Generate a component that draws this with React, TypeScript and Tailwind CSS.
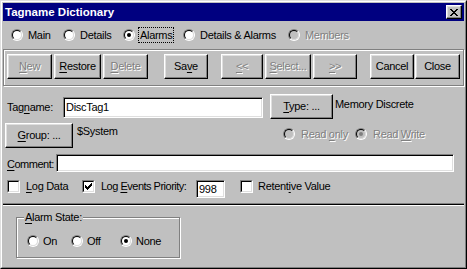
import React from "react";

const dis = "text-[#808080] [text-shadow:1px_1px_0_#fff]";

function Btn({
  className = "",
  disabled = false,
  children,
}: {
  className?: string;
  disabled?: boolean;
  children: React.ReactNode;
}) {
  return (
    <div
      className={`flex h-[25px] shrink-0 items-center justify-center border border-t-white border-l-white border-r-black border-b-black shadow-[inset_-1px_-1px_0_#808080,inset_1px_1px_0_#dfdfdf] ${
        disabled ? dis : "text-black"
      } ${className}`}
    >
      {children}
    </div>
  );
}

function Radio({ checked = false, disabled = false }: { checked?: boolean; disabled?: boolean }) {
  return (
    <span className="block h-[12px] w-[12px] shrink-0 rounded-full border border-t-[#808080] border-l-[#808080] border-r-white border-b-white">
      <span
        className={`flex h-full w-full items-center justify-center rounded-full border border-t-black border-l-black border-r-[#dfdfdf] border-b-[#dfdfdf] ${
          disabled ? "bg-[#c0c0c0]" : "bg-white"
        }`}
      >
        {checked && (
          <span className={`h-[4px] w-[4px] rounded-full ${disabled ? "bg-[#808080]" : "bg-black"}`} />
        )}
      </span>
    </span>
  );
}

function Check({ checked = false }: { checked?: boolean }) {
  return (
    <span className="block h-[13px] w-[13px] shrink-0 border border-t-[#808080] border-l-[#808080] border-r-white border-b-white">
      <span className="flex h-full w-full items-center justify-center border border-t-black border-l-black border-r-[#dfdfdf] border-b-[#dfdfdf] bg-white">
        {checked && (
          <svg width="7" height="7" viewBox="0 0 7 7" shapeRendering="crispEdges">
            <path
              d="M6 0h1v3h-1zM5 1h1v3h-1zM4 2h1v3h-1zM3 3h1v3h-1zM2 4h1v3h-1zM1 3h1v3h-1zM0 2h1v3h-1z"
              fill="#000"
            />
          </svg>
        )}
      </span>
    </span>
  );
}

function Field({ className = "", children }: { className?: string; children?: React.ReactNode }) {
  return (
    <div
      className={`flex shrink-0 items-center border border-t-[#808080] border-l-[#808080] border-r-white border-b-white bg-white pl-[2px] shadow-[inset_1px_1px_0_#000,inset_-1px_-1px_0_#dfdfdf] ${className}`}
    >
      {children}
    </div>
  );
}

export default function App() {
  return (
    <div className="h-[269px] w-[467px] whitespace-nowrap bg-[#c0c0c0] font-['Liberation_Sans',Arial,sans-serif] text-[11px] leading-[13px] tracking-[-0.3px] text-black">
      <div className="h-full w-full border border-t-[#dfdfdf] border-l-[#dfdfdf] border-r-black border-b-black">
        <div className="flex h-full w-full flex-col border border-t-white border-l-white border-r-[#808080] border-b-[#808080] p-[1px]">
          {/* title bar */}
          <div className="flex h-[18px] shrink-0 items-center justify-between bg-[#000080] pl-[2px] pr-[2px]">
            <span className="text-[11.5px] font-bold tracking-normal text-white">Tagname Dictionary</span>
            <div className="flex h-[14px] w-[16px] items-center justify-center border border-t-white border-l-white border-r-black border-b-black bg-[#c0c0c0] shadow-[inset_-1px_-1px_0_#808080,inset_1px_1px_0_#dfdfdf]">
              <svg width="8" height="7" viewBox="0 0 8 7" shapeRendering="crispEdges">
                <path
                  d="M0 0h2v1h-2zM6 0h2v1h-2zM1 1h2v1h-2zM5 1h2v1h-2zM2 2h4v1h-4zM3 3h2v1h-2zM2 4h4v1h-4zM1 5h2v1h-2zM5 5h2v1h-2zM0 6h2v1h-2zM6 6h2v1h-2z"
                  fill="#000"
                />
              </svg>
            </div>
          </div>

          {/* view radios */}
          <div className="flex h-[28px] shrink-0 items-start pl-[8px] pt-[6px]">
            <div className="flex h-[16px] w-[52px] items-center">
              <Radio />
              <span className="ml-[5px]">Main</span>
            </div>
            <div className="flex h-[16px] w-[60px] items-center">
              <Radio />
              <span className="ml-[5px]">Details</span>
            </div>
            <div className="flex h-[16px] w-[60px] items-center">
              <Radio checked />
              <span className="ml-[3px] border border-dotted border-black px-[1px] leading-[14px]">Alarms</span>
            </div>
            <div className="flex h-[16px] w-[105px] items-center">
              <Radio />
              <span className="ml-[5px]">Details &amp; Alarms</span>
            </div>
            <div className="flex h-[16px] items-center">
              <Radio disabled />
              <span className={`ml-[5px] ${dis}`}>Members</span>
            </div>
          </div>

          {/* toolbar group */}
          <div className="flex h-[37px] shrink-0 items-start border border-[#808080] pl-[3px] pt-[4px] shadow-[inset_1px_1px_0_#fff,1px_1px_0_#fff]">
            <Btn disabled className="w-[45px]">
              <span><u className="underline-offset-2">N</u>ew</span>
            </Btn>
            <Btn className="ml-[2px] w-[47px]">
              <span><u className="underline-offset-2">R</u>estore</span>
            </Btn>
            <Btn disabled className="ml-[2px] w-[45px]">
              <span><u className="underline-offset-2">D</u>elete</span>
            </Btn>
            <Btn className="ml-[16px] w-[44px]">
              <span>Sa<u className="underline-offset-2">v</u>e</span>
            </Btn>
            <Btn disabled className="ml-[13px] w-[42px]">
              <span><u className="underline-offset-2">&lt;</u>&lt;</span>
            </Btn>
            <Btn disabled className="ml-[2px] w-[46px]">
              <span><u className="underline-offset-2">S</u>elect...</span>
            </Btn>
            <Btn disabled className="ml-[2px] w-[44px]">
              <span><u className="underline-offset-2">&gt;</u>&gt;</span>
            </Btn>
            <Btn className="ml-[13px] w-[44px]">Cancel</Btn>
            <Btn className="ml-[1px] w-[45px]">Close</Btn>
          </div>

          {/* tagname row */}
          <div className="mt-[8px] flex h-[24px] shrink-0 items-start pl-[4px]">
            <span className="mt-[7px] w-[56px]">
              Tag<u className="underline-offset-2">n</u>ame:
            </span>
            <Field className="mt-[3px] h-[21px] w-[200px]">DiscTag1</Field>
            <Btn className="ml-[7px] h-[24px] w-[63px]">
              <span><u className="underline-offset-2">T</u>ype: ...</span>
            </Btn>
            <span className="ml-[2px] mt-[4px]">Memory Discrete</span>
          </div>

          {/* group row */}
          <div className="mt-[5px] flex h-[25px] shrink-0 items-start pl-[2px]">
            <Btn className="w-[68px]">
              <span><u className="underline-offset-2">G</u>roup: ...</span>
            </Btn>
            <span className="ml-[4px] mt-[2px] w-[206px]">$System</span>
            <div className="mt-[5px] flex h-[12px] w-[72px] items-center">
              <Radio disabled />
              <span className={`ml-[6px] ${dis}`}>
                Read <u className="underline-offset-2">o</u>nly
              </span>
            </div>
            <div className="mt-[5px] flex h-[12px] items-center">
              <Radio disabled checked />
              <span className={`ml-[6px] ${dis}`}>
                Read <u className="underline-offset-2">W</u>rite
              </span>
            </div>
          </div>

          {/* comment row */}
          <div className="mt-[6px] flex h-[18px] shrink-0 items-start pl-[4px]">
            <span className="mt-[4px] w-[49px] tracking-[-0.5px]">
              <u className="underline-offset-2">C</u>omment:
            </span>
            <Field className="h-[18px] w-[398px]" />
          </div>

          {/* checkbox row */}
          <div className="mt-[8px] flex h-[18px] shrink-0 items-start pl-[4px]">
            <div className="flex h-[13px] w-[75px] items-center">
              <Check />
              <span className="ml-[6px]">
                <u className="underline-offset-2">L</u>og Data
              </span>
            </div>
            <div className="flex h-[13px] items-center">
              <Check checked />
              <span className="ml-[6px] w-[95px] tracking-[-0.5px]">
                Log <u className="underline-offset-2">E</u>vents Priority:
              </span>
            </div>
            <Field className="h-[18px] w-[29px]">998</Field>
            <div className="ml-[15px] flex h-[13px] items-center">
              <Check />
              <span className="ml-[5px]">
                Retent<u className="underline-offset-2">i</u>ve Value
              </span>
            </div>
          </div>

          {/* separator */}
          <div className="mt-[5px] h-[3px] shrink-0 border-t border-b border-t-[#808080] border-b-white bg-black" />

          {/* alarm state */}
          <div className="mt-[11px] flex shrink-0 pl-[13px]">
            <div className="relative flex h-[41px] w-[164px] items-start border border-[#808080] pl-[10px] pt-[17px] shadow-[inset_1px_1px_0_#fff,1px_1px_0_#fff]">
              <span className="absolute left-[7px] top-[-7px] bg-[#c0c0c0] px-[1px]">
                <u className="underline-offset-2">A</u>larm State:
              </span>
              <div className="flex h-[12px] w-[44px] items-center">
                <Radio />
                <span className="ml-[4px]">On</span>
              </div>
              <div className="flex h-[12px] w-[49px] items-center">
                <Radio />
                <span className="ml-[4px]">Off</span>
              </div>
              <div className="flex h-[12px] items-center">
                <Radio checked />
                <span className="ml-[4px]">None</span>
              </div>
            </div>
          </div>
        </div>
      </div>
    </div>
  );
}
